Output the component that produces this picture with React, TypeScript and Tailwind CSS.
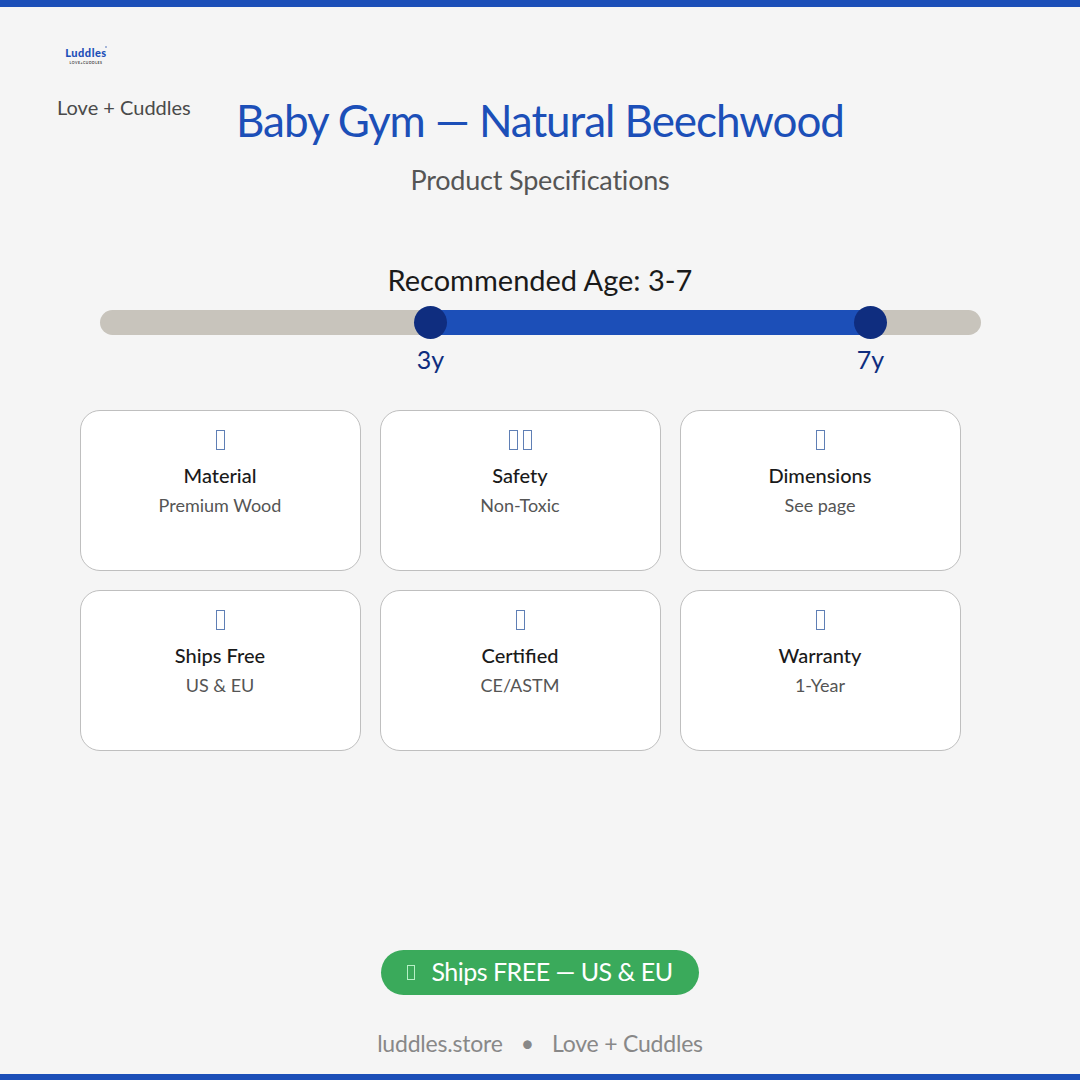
const specs = [
  { title: 'Material', sub: 'Premium Wood', icons: 1 },
  { title: 'Safety', sub: 'Non-Toxic', icons: 2 },
  { title: 'Dimensions', sub: 'See page', icons: 1 },
  { title: 'Ships Free', sub: 'US & EU', icons: 1 },
  { title: 'Certified', sub: 'CE/ASTM', icons: 1 },
  { title: 'Warranty', sub: '1-Year', icons: 1 },
];

// missing-glyph boxes, as they show in the picture
const Tofu = ({ className }: { className: string }) => (
  <span className={`block border ${className}`} />
);

const Handle = ({ className, label }: { className: string; label: string }) => (
  <div className={`absolute top-[-4px] w-[33px] h-[33px] rounded-full bg-[#0f2d7f] ${className}`}>
    <span className="absolute top-[38px] left-0 w-full text-center text-[25px] leading-[30px] text-[#0f2d7f]">
      {label}
    </span>
  </div>
);

export default function App() {
  return (
    <div className="w-[1080px] h-[1080px] flex flex-col bg-[#f5f5f5] overflow-hidden font-['Lato','Liberation_Sans',sans-serif]">
      <div className="h-[7px] bg-[#1c4fb8]" />

      {/* logo */}
      <div className="relative ml-[65px] mt-[38px] w-[42px] h-[21px] flex flex-col items-center">
        <span className="text-[11px] leading-[15px] font-black tracking-[0.5px] text-[#1c4fb8]">Luddles</span>
        <span className="mt-[1px] text-[3.5px] leading-[5px] font-bold tracking-[0.5px] text-[#444]">LOVE+CUDDLES</span>
        <span className="absolute top-[1px] right-[0px] w-[2px] h-[2px] rounded-full bg-[#8aa0cf]" />
      </div>

      {/* header */}
      <div className="grid grid-cols-[1fr_auto_1fr] mt-[26px]">
        <span className="pl-[57px] text-[20px] leading-[30px] text-[#4a4a4a]">Love + Cuddles</span>
        <h1 className="text-[44px] leading-[56px] tracking-[-1.05px] font-normal text-[#1c4fb8]">Baby Gym — Natural Beechwood</h1>
      </div>
      <p className="mt-[15px] text-center text-[27px] leading-[34px] tracking-[-0.2px] text-[#555]">Product Specifications</p>

      {/* age range */}
      <p className="mt-[65px] text-center text-[29px] leading-[36px] text-[#1a1a1a]">Recommended Age: 3-7</p>
      <div className="relative ml-[100px] mt-[12px] w-[881px] h-[25px] rounded-full bg-[#c8c4bc]">
        <div className="absolute inset-y-0 left-[330px] w-[440px] bg-[#1c4fb8]" />
        <Handle className="left-[314px]" label="3y" />
        <Handle className="left-[754px]" label="7y" />
      </div>

      {/* spec cards */}
      <div className="grid grid-cols-[repeat(3,281px)] auto-rows-[161px] gap-[19px] ml-[80px] mt-[75px]">
        {specs.map((item) => (
          <div
            key={item.title}
            className="flex flex-col items-center pt-[19px] pr-[1px] bg-white border border-[#bfbfbf] rounded-[20px]"
          >
            <div className="flex gap-[5px] h-[21px]">
              {Array.from({ length: item.icons }).map((_, idx) => (
                <Tofu key={idx} className="w-[9px] h-[20px] border-[#5f7fb5]" />
              ))}
            </div>
            <h3 className="mt-[12px] text-[20px] leading-[24px] font-medium text-[#1a1a1a]">{item.title}</h3>
            <p className="mt-[6px] text-[18px] leading-[24px] text-[#555]">{item.sub}</p>
          </div>
        ))}
      </div>

      {/* shipping pill + footer */}
      <div className="mt-auto flex justify-center">
        <div className="flex items-center gap-[16px] h-[45px] px-[26px] rounded-full bg-[#3aaa5b]">
          <Tofu className="w-[8px] h-[15px] border-[#b6f0c6]" />
          <span className="pb-[3px] text-[25px] leading-[34px] tracking-[-0.5px] text-white">Ships FREE — US & EU</span>
        </div>
      </div>
      <div className="mt-[32px] mb-[15px] flex justify-center gap-[18px] text-[23px] leading-[32px] tracking-[-0.2px] text-[#888]">
        <span>luddles.store</span>
        <span>•</span>
        <span>Love + Cuddles</span>
      </div>

      <div className="h-[6px] bg-[#1c4fb8]" />
    </div>
  );
}
